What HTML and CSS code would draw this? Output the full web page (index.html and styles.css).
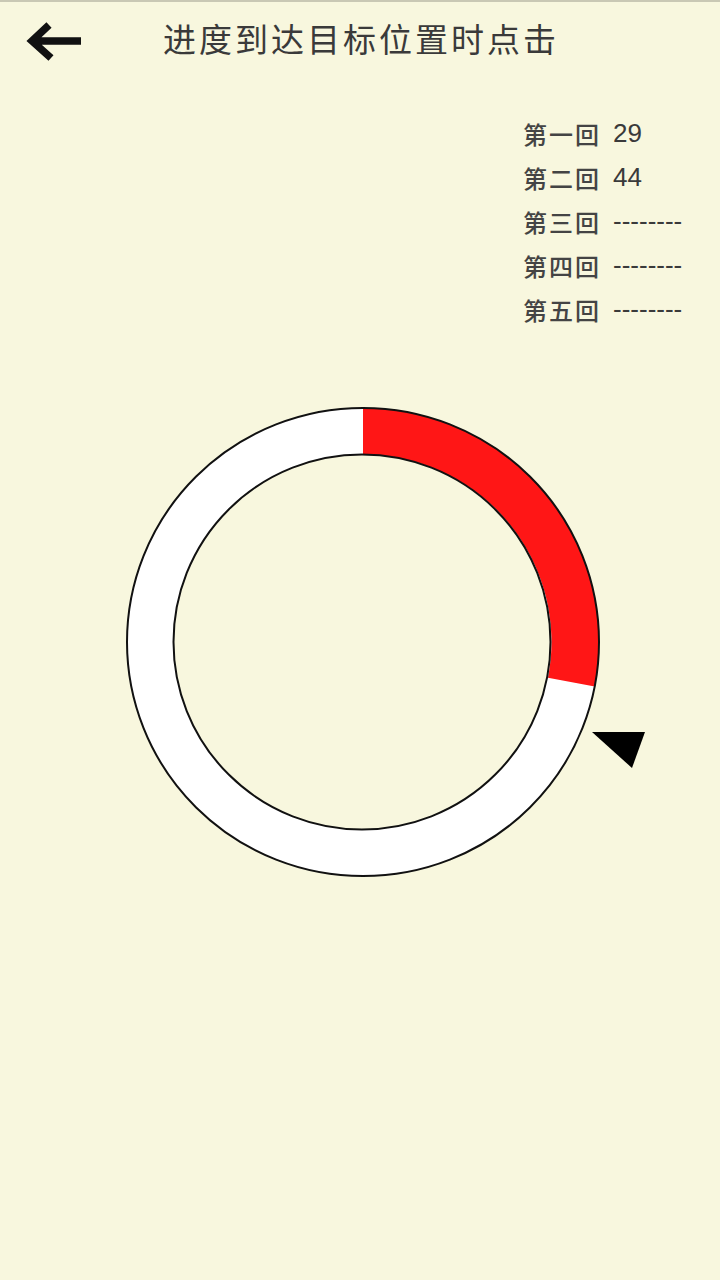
FILE: index.html
```html
<!DOCTYPE html>
<html lang="zh">
<head>
<meta charset="utf-8">
<title>进度到达目标位置时点击</title>
<link rel="stylesheet" href="styles.css">
</head>
<body>
<div class="page">
  <header class="bar">
    <svg class="back" width="60" height="44" viewBox="0 0 60 44">
      <path d="M56 20 H8 M24 4 L7 20 L26 37" fill="none" stroke="#111" stroke-width="7.5" stroke-linecap="butt" stroke-linejoin="miter"/>
    </svg>
    <h1 class="title">进度到达目标位置时点击</h1>
  </header>
  <section class="scores">
    <div class="row"><span class="lbl">第一回</span><span class="val">29</span></div>
    <div class="row"><span class="lbl">第二回</span><span class="val">44</span></div>
    <div class="row"><span class="lbl">第三回</span><span class="val">--------</span></div>
    <div class="row"><span class="lbl">第四回</span><span class="val">--------</span></div>
    <div class="row"><span class="lbl">第五回</span><span class="val">--------</span></div>
  </section>
  <section class="dial">
    <svg class="ring" width="720" height="540" viewBox="0 0 720 540">
      <ellipse cx="363" cy="262" rx="236" ry="234" fill="#ffffff"/>
      <path d="M363,28 A236,234 0 0 1 594.7,306.6 L548,297.8 A188.5,187.5 0 0 0 363,74.5 Z" fill="#ff1616"/>
      <ellipse cx="363" cy="262" rx="236" ry="234" fill="none" stroke="#111" stroke-width="2"/>
      <ellipse cx="362" cy="262" rx="188.5" ry="187.5" fill="#f8f7de" stroke="#111" stroke-width="2"/>
      <polygon points="592,352 645,352 632,388" fill="#000"/>
    </svg>
  </section>
</div>
</body>
</html>
```

FILE: styles.css
```css
html, body {
  margin: 0;
  padding: 0;
  background: #f8f7de;
}
.page {
  width: 720px;
  height: 1280px;
  background: #f8f7de;
  border-top: 2px solid #c9c8b4;
  box-sizing: border-box;
  font-family: "Noto Sans CJK SC", "Liberation Sans", sans-serif;
  color: #333;
}
.bar {
  height: 78px;
  display: flex;
  align-items: center;
  padding-bottom: 4px;
}
.back {
  margin: 4px 0 0 25px;
  display: block;
  flex: none;
}
.title {
  margin: 0 0 6px 78px;
  font-size: 33px;
  font-weight: 400;
  line-height: 1;
  color: #3a3a3a;
  letter-spacing: 3px;
  white-space: nowrap;
}
.scores {
  padding-top: 27px;
  padding-left: 523px;
  display: flex;
  flex-direction: column;
}
.row {
  height: 44px;
  display: flex;
  align-items: center;
}
.lbl {
  font-size: 24px;
  font-weight: 500;
  color: #444;
  letter-spacing: 2px;
  width: 90px;
  white-space: nowrap;
}
.val {
  font-family: "Liberation Sans", Arial, sans-serif;
  font-size: 26px;
  color: #3a3a3a;
}
.dial {
  margin-top: 49px;
}
.ring {
  display: block;
}
```
